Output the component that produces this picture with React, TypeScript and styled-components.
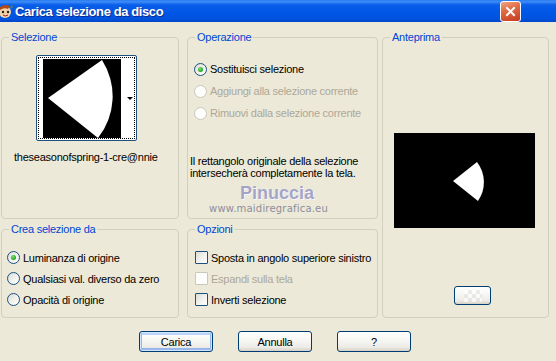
import React from 'react'
import styled, { createGlobalStyle, css } from 'styled-components'

const GlobalStyle = createGlobalStyle`
  html, body {
    margin: 0;
    padding: 0;
    background: #ece9d8;
  }
  body {
    font-family: "Liberation Sans", Arial, sans-serif;
    font-size: 11px;
    letter-spacing: -0.25px;
    color: #000;
  }
`

const Window = styled.div`
  width: 556px;
  height: 361px;
  background: #ece9d8;
  display: flex;
  flex-direction: column;
  overflow: hidden;
`

const TitleBar = styled.div`
  height: 22px;
  flex: none;
  display: flex;
  align-items: center;
  background: linear-gradient(180deg, #2a7bf0 0%, #3d8cf7 8%, #0a5ee9 22%, #0056e6 55%, #0053df 85%, #0045c8 100%);
  padding-right: 35px;
`

const TitleIcon = styled.svg`
  width: 14px;
  height: 16px;
  flex: none;
`

const TitleText = styled.span`
  margin-left: 1px;
  color: #fff;
  font-weight: bold;
  font-size: 13px;
  letter-spacing: -0.4px;
  text-shadow: 1px 1px 0 #0f2a8a;
  flex: 1;
`

const CloseButton = styled.div`
  width: 19px;
  height: 19px;
  border: 1px solid #fff;
  border-radius: 3px;
  background: linear-gradient(160deg, #f0a589 0%, #e06b44 40%, #cf4a2c 80%, #c13b26 100%);
  display: flex;
  align-items: center;
  justify-content: center;
`

const Content = styled.div`
  padding: 15px 0 0 1px;
  display: flex;
  flex-direction: column;
`

const Panels = styled.div`
  display: grid;
  grid-template-columns: 178px 8px 191px 4px 167px;
  grid-template-rows: 182px 89px;
  row-gap: 10px;
  grid-template-areas:
    "sel . op . prev"
    "crea . opt . prev";
`

const Group = styled.div<{ $area: string }>`
  grid-area: ${p => p.$area};
  position: relative;
  border: 1px solid #d0d0bf;
  border-radius: 4px;
  display: flex;
  flex-direction: column;
`

const Caption = styled.span`
  position: absolute;
  top: -8px;
  left: 7px;
  padding: 0 2px;
  background: #ece9d8;
  color: #0046d5;
  line-height: 14px;
  white-space: nowrap;
`

const ThumbButton = styled.div`
  margin: 17px 0 0 34px;
  width: 101px;
  height: 86px;
  box-sizing: border-box;
  border: 1px solid #1c5180;
  border-radius: 2px;
  background: #fff;
  padding: 1px;
`

const FocusRing = styled.div`
  height: 100%;
  box-sizing: border-box;
  border: 1px dotted #000;
  display: flex;
  align-items: center;
  padding-left: 4px;
`

const DropArrow = styled.span`
  margin-left: auto;
  margin-right: 1px;
  width: 0;
  height: 0;
  border-left: 3px solid transparent;
  border-right: 3px solid transparent;
  border-top: 3px solid #000;
`

const FileName = styled.div`
  margin: 10px 0 0 12px;
  line-height: 12px;
  white-space: nowrap;
`

const OptionList = styled.div<{ $top: number; $left: number }>`
  display: flex;
  flex-direction: column;
  padding: ${p => p.$top}px 0 0 ${p => p.$left}px;
`

const OptionRow = styled.label<{ $h: number; $disabled?: boolean }>`
  height: ${p => p.$h}px;
  display: flex;
  align-items: center;
  gap: 3px;
  white-space: nowrap;
  color: ${p => (p.$disabled ? '#aca899' : '#000')};
`

const markBase = css<{ $disabled?: boolean }>`
  width: 13px;
  height: 13px;
  box-sizing: border-box;
  flex: none;
  border: 1px solid ${p => (p.$disabled ? '#cac8bb' : '#1c5180')};
  background: ${p => (p.$disabled ? '#fdfdfb' : 'linear-gradient(135deg, #dcdcd7 0%, #f2f2ee 55%, #ffffff 100%)')};
  display: inline-flex;
  align-items: center;
  justify-content: center;
`

const RadioMark = styled.span<{ $disabled?: boolean }>`
  ${markBase};
  border-radius: 50%;
`

const RadioDot = styled.span`
  width: 5px;
  height: 5px;
  border-radius: 50%;
  background: radial-gradient(circle at 40% 35%, #7be37a 0%, #2fb02d 55%, #1a8d18 100%);
`

const CheckMark = styled.span<{ $disabled?: boolean }>`
  ${markBase};
  border-radius: 1px;
`

const Note = styled.div`
  margin: 31px 0 0 2px;
  line-height: 12px;
  white-space: nowrap;
`

const Watermark = styled.div`
  margin-top: 5px;
  display: flex;
  flex-direction: column;
  align-items: flex-start;
`

const WatermarkName = styled.span`
  margin-left: 52px;
  font-family: "Liberation Sans", Arial, sans-serif;
  font-weight: bold;
  font-size: 18px;
  letter-spacing: 0;
  line-height: 19px;
  color: #a4a4c6;
  text-shadow: 0 0 1px #fff, 1px 1px 0 #f6f6ff;
`

const WatermarkUrl = styled.span`
  margin-left: 21px;
  font-family: "DejaVu Sans", sans-serif;
  font-size: 10px;
  letter-spacing: 0.2px;
  line-height: 12px;
  color: #8d8d9c;
`

const PreviewBox = styled.svg`
  margin: 95px 0 0 11px;
  width: 141px;
  height: 95px;
  display: block;
`

const XpButton = styled.button<{ $default?: boolean; $w: number; $h?: number }>`
  width: ${p => p.$w}px;
  height: ${p => p.$h ?? 21}px;
  box-sizing: border-box;
  border: 1px solid #003c74;
  border-radius: 3px;
  background: linear-gradient(180deg, #ffffff 0%, #f6f6f3 45%, #ecebe6 80%, #d6d0c5 100%);
  font-family: "Liberation Sans", Arial, sans-serif;
  font-size: 11px;
  letter-spacing: -0.25px;
  color: #000;
  padding: 0;
  display: flex;
  align-items: center;
  justify-content: center;
  ${p =>
    p.$default &&
    css`
      box-shadow: inset 0 0 0 1px #cee7ff, inset 0 -1px 0 2px #98b8ea, inset 0 1px 0 2px #bcd4f6;
    `}
`

const SwatchButton = styled(XpButton)`
  margin: 58px 0 0 71px;
`

const Checker = styled.span`
  width: 18px;
  height: 12px;
  opacity: 0.6;
  background-color: #fff;
  background-image: linear-gradient(45deg, #e2e2e2 25%, transparent 25%, transparent 75%, #e2e2e2 75%),
    linear-gradient(45deg, #e2e2e2 25%, transparent 25%, transparent 75%, #e2e2e2 75%);
  background-size: 8px 8px;
  background-position: 0 0, 4px 4px;
`

const ButtonRow = styled.div`
  margin: 13px 0 0 138px;
  display: flex;
  gap: 25px;
`

const Radio = ({ checked, disabled }: { checked?: boolean; disabled?: boolean }) => (
  <RadioMark $disabled={disabled}>{checked && <RadioDot />}</RadioMark>
)

const operations = [
  { label: 'Sostituisci selezione', checked: true },
  { label: 'Aggiungi alla selezione corrente', disabled: true },
  { label: 'Rimuovi dalla selezione corrente', disabled: true },
]

const sources = [
  { label: 'Luminanza di origine', checked: true },
  { label: 'Qualsiasi val. diverso da zero' },
  { label: 'Opacità di origine' },
]

const options = [
  { label: 'Sposta in angolo superiore sinistro' },
  { label: 'Espandi sulla tela', disabled: true },
  { label: 'Inverti selezione' },
]

export default function App() {
  return (
    <Window>
      <GlobalStyle />
      <TitleBar>
        <TitleIcon viewBox="0 0 14 16">
          <ellipse cx="5" cy="9" rx="6" ry="6" fill="#f3d3a8" />
          <path d="M-1 5 Q4 0 10 3 L8 6 Q4 4 0 7 Z" fill="#b04a1a" />
          <circle cx="3" cy="9" r="1.2" fill="#222" />
          <circle cx="8" cy="9" r="1.2" fill="#222" />
          <path d="M3 12 Q5 14 8 12" stroke="#a02020" strokeWidth="1" fill="none" />
          <path d="M10 4 L13 2 L12 6 Z" fill="#5a8a2a" />
        </TitleIcon>
        <TitleText>Carica selezione da disco</TitleText>
        <CloseButton>
          <svg width="11" height="11" viewBox="0 0 11 11">
            <path d="M2 2 L9 9 M9 2 L2 9" stroke="#fff" strokeWidth="2" strokeLinecap="square" />
          </svg>
        </CloseButton>
      </TitleBar>

      <Content>
        <Panels>
          <Group $area="sel">
            <Caption>Selezione</Caption>
            <ThumbButton>
              <FocusRing>
                <svg width="78" height="79" viewBox="0 0 78 79">
                  <rect width="78" height="79" fill="#000" />
                  <path d="M5 39 L59 1 A67 67 0 0 1 55 79 Z" fill="#fff" />
                </svg>
                <DropArrow />
              </FocusRing>
            </ThumbButton>
            <FileName>theseasonofspring-1-cre@nnie</FileName>
          </Group>

          <Group $area="op">
            <Caption>Operazione</Caption>
            <OptionList $top={20} $left={6}>
              {operations.map(o => (
                <OptionRow key={o.label} $h={22} $disabled={o.disabled}>
                  <Radio checked={o.checked} disabled={o.disabled} />
                  {o.label}
                </OptionRow>
              ))}
            </OptionList>
            <Note>
              Il rettangolo originale della selezione
              <br />
              intersecherà completamente la tela.
            </Note>
            <Watermark>
              <WatermarkName>Pinuccia</WatermarkName>
              <WatermarkUrl>www.maidiregrafica.eu</WatermarkUrl>
            </Watermark>
          </Group>

          <Group $area="prev">
            <Caption>Anteprima</Caption>
            <PreviewBox viewBox="0 0 141 95">
              <rect width="141" height="95" fill="#000" />
              <path d="M59 48 L83 29 A33 33 0 0 1 84 68 Z" fill="#fff" />
            </PreviewBox>
            <SwatchButton $w={37} $h={19}>
              <Checker />
            </SwatchButton>
          </Group>

          <Group $area="crea">
            <Caption>Crea selezione da</Caption>
            <OptionList $top={17} $left={5}>
              {sources.map(o => (
                <OptionRow key={o.label} $h={21}>
                  <Radio checked={o.checked} />
                  {o.label}
                </OptionRow>
              ))}
            </OptionList>
          </Group>

          <Group $area="opt">
            <Caption>Opzioni</Caption>
            <OptionList $top={17} $left={7}>
              {options.map(o => (
                <OptionRow key={o.label} $h={21} $disabled={o.disabled}>
                  <CheckMark $disabled={o.disabled} />
                  {o.label}
                </OptionRow>
              ))}
            </OptionList>
          </Group>
        </Panels>

        <ButtonRow>
          <XpButton $default $w={74}>Carica</XpButton>
          <XpButton $w={74}>Annulla</XpButton>
          <XpButton $w={74}>?</XpButton>
        </ButtonRow>
      </Content>
    </Window>
  )
}
